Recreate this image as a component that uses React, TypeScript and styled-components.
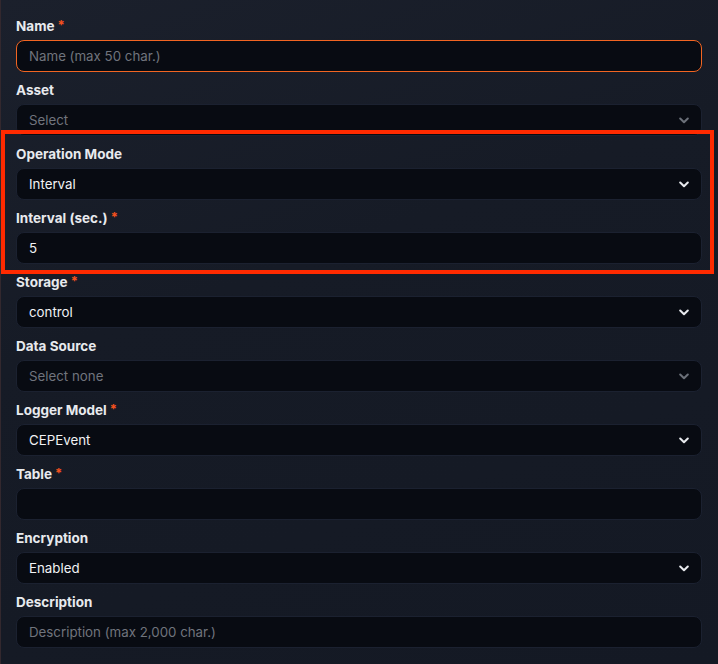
import React from "react";
import styled, { createGlobalStyle } from "styled-components";

const GlobalStyle = createGlobalStyle`
  html, body {
    margin: 0;
    padding: 0;
    background: #151a25;
  }
  body {
    font-family: Inter, "Noto Sans", sans-serif;
    -webkit-font-smoothing: antialiased;
  }
`;

type FieldDef = {
  label: string;
  required?: boolean;
  kind: "input" | "select";
  value?: string;
  placeholder?: string;
  disabled?: boolean;
  focused?: boolean;
};

const before: FieldDef[] = [
  { label: "Name", required: true, kind: "input", placeholder: "Name (max 50 char.)", focused: true },
  { label: "Asset", kind: "select", placeholder: "Select", disabled: true },
];

const highlighted: FieldDef[] = [
  { label: "Operation Mode", kind: "select", value: "Interval" },
  { label: "Interval (sec.)", required: true, kind: "input", value: "5" },
];

const after: FieldDef[] = [
  { label: "Storage", required: true, kind: "select", value: "control" },
  { label: "Data Source", kind: "select", placeholder: "Select none", disabled: true },
  { label: "Logger Model", required: true, kind: "select", value: "CEPEvent" },
  { label: "Table", required: true, kind: "input", value: "" },
  { label: "Encryption", kind: "select", value: "Enabled" },
  { label: "Description", kind: "input", placeholder: "Description (max 2,000 char.)" },
];

const Chevron: React.FC<{ muted?: boolean }> = ({ muted }) => (
  <ChevronIcon width="10" height="7" viewBox="0 0 10 7" $muted={muted}>
    <polyline points="1.2,1.5 5,5.3 8.8,1.5" fill="none" strokeWidth="2" strokeLinecap="round" strokeLinejoin="round" />
  </ChevronIcon>
);

const Field: React.FC<{ field: FieldDef }> = ({ field }) => (
  <FieldWrap>
    <Label>
      {field.label}
      {field.required && <Star>*</Star>}
    </Label>
    <Control $focused={field.focused}>
      {field.value ? <Value>{field.value}</Value> : <Placeholder>{field.placeholder ?? ""}</Placeholder>}
      {field.kind === "select" && <Chevron muted={field.disabled} />}
    </Control>
  </FieldWrap>
);

const App: React.FC = () => {
  return (
    <Page>
      <GlobalStyle />
      <Form>
        {before.map((f) => (
          <Field key={f.label} field={f} />
        ))}
        <Highlight>
          {highlighted.map((f) => (
            <Field key={f.label} field={f} />
          ))}
        </Highlight>
        {after.map((f) => (
          <Field key={f.label} field={f} />
        ))}
      </Form>
    </Page>
  );
};

export default App;

const Page = styled.div`
  box-sizing: border-box;
  width: 718px;
  height: 664px;
  padding: 16px 16px 0 16px;
  box-shadow: inset 1px 0 0 #33282e;
  background: linear-gradient(160deg, #1b202c 0%, #161b26 40%, #141924 100%);
  overflow: hidden;
`;

const Form = styled.div`
  display: flex;
  flex-direction: column;
  gap: 8px;
  width: 686px;
`;

const Highlight = styled.div`
  position: relative;
  display: flex;
  flex-direction: column;
  gap: 8px;

  &::after {
    content: "";
    position: absolute;
    top: -14px;
    bottom: -10px;
    left: -15px;
    right: -12px;
    border: 4px solid #ff2a00;
    pointer-events: none;
  }
`;

const FieldWrap = styled.div`
  display: flex;
  flex-direction: column;
  gap: 4px;
`;

const Label = styled.div`
  display: flex;
  align-items: flex-start;
  gap: 3px;
  height: 20px;
  line-height: 20px;
  font-size: 13.5px;
  font-weight: 700;
  color: #e8eaee;
`;

const Star = styled.span`
  color: #f4511e;
  font-size: 13px;
  line-height: 19px;
`;

const Control = styled.div<{ $focused?: boolean }>`
  box-sizing: border-box;
  display: flex;
  align-items: center;
  justify-content: space-between;
  height: 32px;
  padding: 0 12px;
  border-radius: 8px;
  background: #080b12;
  border: 1px solid ${(p) => (p.$focused ? "#f26522" : "#1b2130")};
  font-size: 13.3px;
`;

const Value = styled.span`
  color: #f1f2f4;
`;

const Placeholder = styled.span`
  color: #70747d;
`;

const ChevronIcon = styled.svg<{ $muted?: boolean }>`
  flex-shrink: 0;
  stroke: ${(p) => (p.$muted ? "#6b7079" : "#e8eaee")};
`;
